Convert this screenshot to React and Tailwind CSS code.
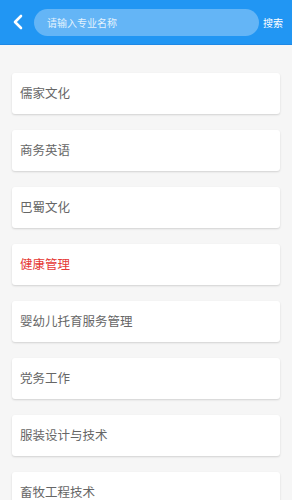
import React from 'react'

const majors = [
  { name: '儒家文化' },
  { name: '商务英语' },
  { name: '巴蜀文化' },
  { name: '健康管理', active: true },
  { name: '婴幼儿托育服务管理' },
  { name: '党务工作' },
  { name: '服装设计与技术' },
  { name: '畜牧工程技术' },
]

const App = () => {
  return (
    <div className="min-h-[500px] bg-[#f6f6f6] overflow-hidden" style={{ fontFamily: '"Noto Sans CJK SC", "Noto Sans", sans-serif' }}>
      <div className="h-[45px] bg-[#2196f3] flex items-center border-b border-[#1e88e5]">
        <button className="w-[34px] h-full flex items-center justify-center pl-[2px]">
          <svg width="14" height="16" viewBox="0 0 14 16" fill="none">
            <path d="M10 2L4 8L10 14" stroke="white" strokeWidth="2.6" strokeLinecap="round" strokeLinejoin="round" />
          </svg>
        </button>
        <div className="w-[225px] h-[27px] rounded-full bg-[#64b5f6] flex items-center pl-[13px]">
          <span className="text-[10px] text-[#e3f2fd]">请输入专业名称</span>
        </div>
        <span className="ml-[4px] text-[10px] text-white">搜索</span>
      </div>
      <div className="pt-[28px] px-[12px] flex flex-col gap-[16px]">
        {majors.map(m => (
          <div key={m.name} className="h-[41px] bg-white rounded-[3px] shadow-[0_1px_2px_rgba(0,0,0,0.15)] flex items-center pl-[8px]">
            <span className={`text-[12.5px] ${m.active ? 'text-[#e53935]' : 'text-[#666666]'}`}>{m.name}</span>
          </div>
        ))}
      </div>
    </div>
  )
}

export default App
